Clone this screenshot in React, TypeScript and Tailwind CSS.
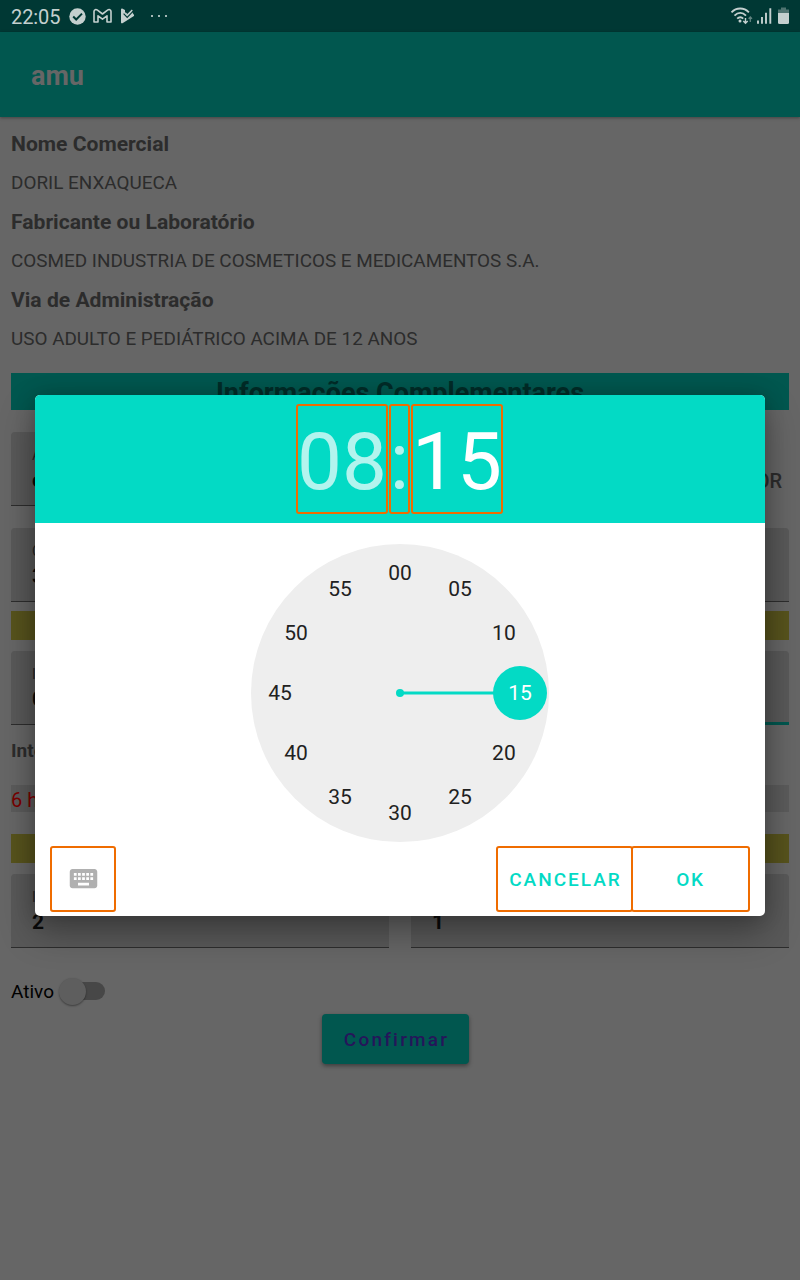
import type { ReactNode } from "react";

const details = [
  ["Nome Comercial", "DORIL ENXAQUECA"],
  ["Fabricante ou Laboratório", "COSMED INDUSTRIA DE COSMETICOS E MEDICAMENTOS S.A."],
  ["Via de Administração", "USO ADULTO E PEDIÁTRICO ACIMA DE 12 ANOS"],
];

const minutes = ["00", "05", "10", "15", "20", "25", "30", "35", "40", "45", "50", "55"];

function StatusBar() {
  return (
    <div className="flex h-8 items-center bg-[#003834] pl-[11px] pr-2.5 text-[#c4d0cf]">
      <span className="w-[58px] pt-0.5 text-[20px] leading-8 tracking-[-0.1px]">22:05</span>
      <svg width="17" height="17" viewBox="0 0 17 17">
        <circle cx="8.5" cy="8.5" r="8.2" fill="#c4d0cf" />
        <path d="M4.2 8.5l3 3L13 5.6" fill="none" stroke="#003834" strokeWidth="2" />
      </svg>
      <svg className="ml-[7px]" width="19" height="16" viewBox="0 0 19 16">
        <path
          d="M1 3.600C1 1.600 3 1 4.500 2.200L9.500 6l5-3.800C16 1 18 1.600 18 3.600V14h-4V7.800L9.500 11.200 5 7.800V14H1z"
          fill="none"
          stroke="#c4d0cf"
          strokeWidth="1.600"
          strokeLinejoin="round"
        />
      </svg>
      <svg className="ml-[8px]" width="15" height="16" viewBox="0 0 15 16">
        <path
          d="M1 1.600C1 .6 1.800.3 2.600.7L5 2v3.200l2.200 2.300L11.500 3.300l2 2.900c.8.800.8 1.500 0 2.100L2.500 15.200c-.8.4-1.500 0-1.500-.8z"
          fill="#c4d0cf"
        />
        <path d="M3.600 5.600l3.600 3.700 5-5.100" fill="none" stroke="#003834" strokeWidth="1.200" />
        <path d="M5.200 4.700l2.100 2.200 5-5" fill="none" stroke="#c4d0cf" strokeWidth="1.400" />
      </svg>
      <div className="ml-[16px] mt-[-1px] flex gap-[5px]">
        <i className="size-[2px] bg-[#a5b8b6]" />
        <i className="size-[2px] bg-[#a5b8b6]" />
        <i className="size-[2px] bg-[#a5b8b6]" />
      </div>
      <svg className="ml-auto" width="60" height="20" viewBox="0 0 60 20">
        <g fill="none" stroke="#c4d0cf" strokeWidth="1.900">
          <path d="M1.500 6.300c5-5 12.400-5 17.400 0" />
          <path d="M4.500 9.600c3.500-3.400 8-3.400 11.500 0" />
          <path d="M7.200 12.600c2-1.900 4.200-1.900 6 0" />
        </g>
        <circle cx="10" cy="14.900" r="1.500" fill="#c4d0cf" />
        <path d="M15.500 12v5M13.300 15l2.200 2.200L17.700 15" fill="none" stroke="#c4d0cf" strokeWidth="1.400" />
        <path d="M20.300 16v-5M18.600 12.700l1.700-1.700 1.700 1.700" fill="none" stroke="#5f827f" strokeWidth="1.300" />
        <path d="M28 14.500v3.300M32 11v6.800M36 6.800v11M40.300 2.300v15.500" stroke="#c4d0cf" strokeWidth="1.900" />
        <path d="M51 1.500h5v2h3V7H48V3.500h3z" fill="#4f7471" />
        <path d="M48 7h11v9.500q0 1.500-1.500 1.500h-8q-1.500 0-1.500-1.500z" fill="#c4d0cf" />
      </svg>
    </div>
  );
}

function Field({ label, value, active }: { label?: string; value?: string; active?: boolean }) {
  return (
    <div
      className={
        "h-[74px] w-[378px] rounded-t-[4px] bg-[#595959] pl-[21px] " +
        (active ? "border-b-[3px] border-[#01574f]" : "border-b border-[#2d2d2d]")
      }
    >
      <div className="h-[35px] pt-[13px] text-[14px] leading-5 text-[#252525]">{label}</div>
      <div className="text-[21px] font-bold leading-[27px] text-[#0b0b0b]">{value}</div>
    </div>
  );
}

function FieldRow({ children }: { children: ReactNode }) {
  return <div className="flex justify-between">{children}</div>;
}

function Dial() {
  return (
    <svg className="mx-auto mt-[21px] block" width="298" height="298" viewBox="0 0 298 298">
      <circle cx="149" cy="149" r="149" fill="#eeeeee" />
      <path d="M149 149H269" stroke="#03dac5" strokeWidth="3" />
      <circle cx="149" cy="149" r="4" fill="#03dac5" />
      <circle cx="269" cy="149" r="27" fill="#03dac5" />
      {minutes.map((m, i) => {
        const a = (i * Math.PI) / 6;
        return (
          <text
            key={m}
            x={149 + 120 * Math.sin(a)}
            y={156.300 - 120 * Math.cos(a)}
            textAnchor="middle"
            fontSize="21"
            fill={m === "15" ? "#ffffff" : "#212121"}
          >
            {m}
          </text>
        );
      })}
    </svg>
  );
}

function TimeDialog() {
  return (
    <div className="absolute left-[35px] top-[395px] flex h-[521px] w-[730px] flex-col overflow-hidden rounded-[5px] bg-white shadow-[0_16px_36px_rgba(0,0,0,0.32),0_0_20px_rgba(0,0,0,0.18)]">
      <div className="flex h-32 shrink-0 justify-center gap-px bg-[#03dac5] pr-px pt-[9px] text-[80px] leading-[113px] text-white">
        <div className="flex h-[110px] w-[92px] justify-center rounded-[3px] border-2 border-[#ef6c00] text-[#b3f4ee]">08</div>
        <div className="flex h-[110px] w-[21px] justify-center rounded-[3px] border-2 border-[#ef6c00] text-[#b3f4ee]">:</div>
        <div className="flex h-[110px] w-[92px] justify-center rounded-[3px] border-2 border-[#ef6c00]">15</div>
      </div>
      <Dial />
      <div className="mt-1 flex items-center pl-[15px] pr-[15px] text-[19px] font-medium text-[#03dac5]">
        <button className="flex size-[66px] items-center justify-center rounded-[3px] border-2 border-[#ef6c00]">
          <svg className="-mt-px" width="33" height="33" viewBox="0 0 24 24" fill="#b0b0b0">
            <path d="M20 5H4c-1.100 0-1.990.9-1.990 2L2 17c0 1.100.9 2 2 2h16c1.100 0 2-.9 2-2V7c0-1.100-.9-2-2-2zm-9 3h2v2h-2V8zm0 3h2v2h-2v-2zM8 8h2v2H8V8zm0 3h2v2H8v-2zm-1 2H5v-2h2v2zm0-3H5V8h2v2zm9 7H8v-2h8v2zm0-4h-2v-2h2v2zm0-3h-2V8h2v2zm3 3h-2v-2h2v2zm0-3h-2V8h2v2z" />
          </svg>
        </button>
        <button className="ml-auto h-[66px] w-[137px] rounded-[3px] border-2 border-[#ef6c00] pl-0.5 pt-0.5 tracking-[2px]">CANCELAR</button>
        <button className="-ml-0.5 h-[66px] w-[119px] rounded-[3px] border-2 border-[#ef6c00] pt-0.5 tracking-[1.700px]">OK</button>
      </div>
    </div>
  );
}

export default function App() {
  return (
    <div className="relative h-[1280px] w-[800px] overflow-hidden bg-[#666666] font-[Roboto,sans-serif] text-[#2c2c2c]">
      <StatusBar />
      <header className="flex h-[85px] items-center bg-[#01574f] pl-[31px] pt-[3px] text-[27px] font-bold text-[#666666] shadow-[0_1px_3px_rgba(0,0,0,0.35)]">
        amu
      </header>
      <main className="px-[11px] pt-[13px]">
        {details.map(([label, value]) => (
          <section key={label} className="h-[78px]">
            <h2 className="text-[21.100px] font-bold leading-7">{label}</h2>
            <p className="mt-[12px] text-[18.900px] leading-[26px]">{value}</p>
          </section>
        ))}
        <h1 className="mt-[9px] h-[37px] bg-[#01574f] text-center text-[27px] font-bold leading-[40px] text-[#012c28]">
          Informações Complementares
        </h1>
        <div className="mt-[22px] flex items-center justify-between">
          <Field label="A" value="c" />
          <span className="mr-[7px] mt-6 text-[20px] font-medium">OR</span>
        </div>
        <div className="mt-[22px]">
          <FieldRow>
            <Field label="C" value="3" />
            <Field />
          </FieldRow>
        </div>
        <div className="mt-[9px] h-[29px] bg-[#57531d]" />
        <div className="mt-[11px]">
          <FieldRow>
            <Field label="I" value="0" />
            <Field active />
          </FieldRow>
        </div>
        <div className="mt-3 h-[27px] text-[19px] font-bold leading-[27px]">Inte</div>
        <div className="mt-[21px] h-[27px] bg-[#5b5b5b] text-[20px] leading-[30px] text-[#7a0000]">6 h</div>
        <div className="mt-[22px] h-[29px] bg-[#57531d]" />
        <div className="mt-[11px]">
          <FieldRow>
            <Field label="I" value="2" />
            <Field value="1" />
          </FieldRow>
        </div>
        <div className="mt-[29px] flex h-7 items-center text-[19px] text-black">
          <span className="pt-0.5">Ativo</span>
          <div className="ml-[5px] flex h-[28px] w-[47px] items-center">
            <i className="z-10 size-[27px] shrink-0 rounded-full bg-[#5e5e5e] shadow-[0_1px_2px_rgba(0,0,0,0.4)]" />
            <i className="-ml-3 h-[18px] w-[31px] rounded-r-full bg-[#474747]" />
          </div>
        </div>
        <button className="ml-[311px] mt-[9px] h-[50px] w-[147px] rounded-[4px] bg-[#01574f] pl-0.5 pt-0.5 text-[19px] font-medium tracking-[2.200px] text-[#25155a] shadow-[0_2px_4px_rgba(0,0,0,0.4)]">
          Confirmar
        </button>
      </main>
      <TimeDialog />
    </div>
  );
}
